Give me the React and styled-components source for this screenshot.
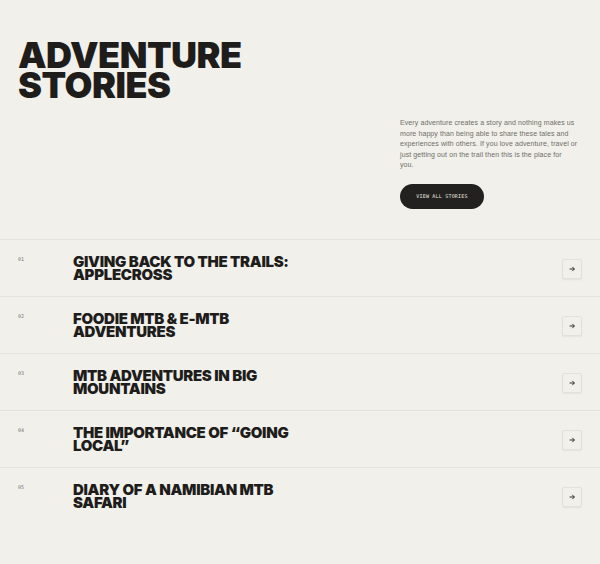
import React from "react";
import styled, { createGlobalStyle } from "styled-components";

const Global = createGlobalStyle`
  html, body { margin: 0; padding: 0; background: #f1f0eb; }
  body { font-family: "Inter", "Liberation Sans", sans-serif; color: #1e1d1b; }
  * { box-sizing: border-box; }
`;

const Page = styled.div`
  width: 600px;
  min-height: 564px;
  background: #f1f0eb;
`;

const Header = styled.header`
  display: flex;
  justify-content: space-between;
  padding: 40px 15px 30px 18px;
  border-bottom: 1px solid #e4e3dd;
`;

const Title = styled.h1`
  margin: 0;
  font-family: "Inter", sans-serif;
  font-weight: 900;
  font-size: 36px;
  line-height: 30px;
  letter-spacing: -0.5px;
  text-transform: uppercase;
  color: #1e1d1b;
`;

const Side = styled.div`
  width: 185px;
  padding-top: 78px;
  display: flex;
  flex-direction: column;
  align-items: flex-start;
`;

const Intro = styled.p`
  margin: 0 0 13px 0;
  font-family: "Liberation Sans", sans-serif;
  font-size: 7px;
  line-height: 10.5px;
  letter-spacing: 0.1px;
  white-space: nowrap;
  color: #706e69;
`;

const Button = styled.a`
  display: inline-flex;
  align-items: center;
  justify-content: center;
  width: 84px;
  height: 25px;
  border-radius: 13px;
  background: #23211f;
  color: #e9e7e1;
  font-family: "DejaVu Sans Mono", monospace;
  font-size: 5px;
  letter-spacing: 0.2px;
  text-transform: uppercase;
  text-decoration: none;
`;

const List = styled.ol`
  list-style: none;
  margin: 0;
  padding: 0;
`;

const Row = styled.li`
  display: flex;
  align-items: flex-start;
  height: 57px;
  padding: 15px 18px 0 18px;
  border-bottom: 1px solid #e4e3dd;
  &:last-child { border-bottom: none; }
`;

const Num = styled.span`
  width: 55px;
  padding-top: 1px;
  font-family: "DejaVu Sans Mono", monospace;
  font-size: 5px;
  color: #77756f;
`;

const RowTitle = styled.h2`
  margin: 0;
  flex: 1;
  max-width: 225px;
  font-family: "Inter", sans-serif;
  font-weight: 900;
  font-size: 15px;
  line-height: 13.5px;
  letter-spacing: -0.3px;
  text-transform: uppercase;
  color: #1e1d1b;
`;

const Spacer = styled.div`
  flex: 1;
`;

const Arrow = styled.button`
  width: 20px;
  height: 20px;
  margin-top: 4px;
  padding: 0;
  display: flex;
  align-items: center;
  justify-content: center;
  background: #f1f0eb;
  border: 1px solid #e2e1db;
  border-radius: 2px;
  box-shadow: 0 1px 2px rgba(0,0,0,0.06);
  cursor: pointer;
`;

const stories = [
  "Giving back to the trails: Applecross",
  "Foodie MTB & E-MTB adventures",
  "MTB adventures in big mountains",
  "The importance of “going local”",
  "Diary of a Namibian MTB safari",
];

export default function App() {
  return (
    <Page>
      <Global />
      <Header>
        <Title>Adventure<br />Stories</Title>
        <Side>
          <Intro>
            Every adventure creates a story and nothing makes us<br />
            more happy than being able to share these tales and<br />
            experiences with others. If you love adventure, travel or<br />
            just getting out on the trail then this is the place for<br />
            you.
          </Intro>
          <Button href="#">View all stories</Button>
        </Side>
      </Header>
      <List>
        {stories.map((s, i) => (
          <Row key={i}>
            <Num>{String(i + 1).padStart(2, "0")}</Num>
            <RowTitle>{s}</RowTitle>
            <Spacer />
            <Arrow aria-label="Open">
              <svg width="6" height="6" viewBox="0 0 10 10" fill="none" stroke="#2a2826" strokeWidth="1.6">
                <path d="M1 5h8M5.5 1.5L9 5l-3.5 3.5" />
              </svg>
            </Arrow>
          </Row>
        ))}
      </List>
    </Page>
  );
}
